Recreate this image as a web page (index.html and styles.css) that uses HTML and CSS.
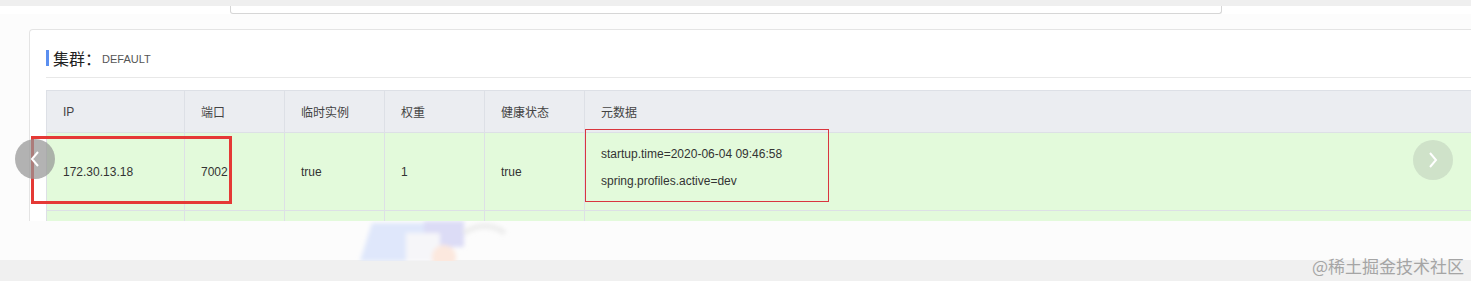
FILE: index.html
```html
<!DOCTYPE html>
<html lang="zh">
<head>
<meta charset="utf-8">
<title>集群</title>
<link rel="stylesheet" href="styles.css">
</head>
<body>
<div class="page">
  <div class="topbar"></div>
  <div class="prev-card"></div>
  <div class="content">
    <section class="card">
      <h3 class="card-title"><span class="title-main">集群：</span><span class="title-sub">DEFAULT</span></h3>
      <div class="divider"></div>
      <table class="grid">
        <colgroup>
          <col class="c-ip"><col class="c-n"><col class="c-n"><col class="c-n"><col class="c-n"><col class="c-meta">
        </colgroup>
        <thead>
          <tr><th>IP</th><th>端口</th><th>临时实例</th><th>权重</th><th>健康状态</th><th>元数据</th></tr>
        </thead>
        <tbody>
          <tr class="row-main">
            <td>172.30.13.18</td><td>7002</td><td>true</td><td>1</td><td>true</td>
            <td class="meta"><div class="meta-line">startup.time=2020-06-04 09:46:58</div><div class="meta-line">spring.profiles.active=dev</div></td>
          </tr>
          <tr class="row-next"><td></td><td></td><td></td><td></td><td></td><td></td></tr>
        </tbody>
      </table>
    </section>
    <div class="mark mark-a"></div>
    <div class="mark mark-b"></div>
    <button class="nav nav-left" aria-label="prev"><svg width="14" height="20" viewBox="0 0 14 20"><path d="M10 3 L4 10 L10 17" fill="none" stroke="#fff" stroke-width="2"/></svg></button>
    <button class="nav nav-right" aria-label="next"><svg width="14" height="20" viewBox="0 0 14 20"><path d="M4 3 L10 10 L4 17" fill="none" stroke="#fff" stroke-width="2"/></svg></button>
  </div>
  <div class="ghost">
    <svg width="200" height="40" viewBox="0 0 200 40">
      <defs><filter id="b" x="-20%" y="-20%" width="140%" height="140%"><feGaussianBlur stdDeviation="2"/></filter></defs>
      <g filter="url(#b)">
        <polygon points="20,40 32,2 92,2 84,40" fill="#dfe7fb"/>
        <rect x="84" y="0" width="40" height="26" fill="#dcdcf6"/>
        <rect x="66" y="12" width="34" height="28" fill="#f6f6f9"/>
        <circle cx="104" cy="36" r="12" fill="#fce8de"/>
        <path d="M124 12 Q145 -2 165 12" stroke="#eeeeee" stroke-width="6" fill="none"/>
      </g>
    </svg>
  </div>
  <div class="footer"><span class="watermark">@稀土掘金技术社区</span></div>
</div>
</body>
</html>
```

FILE: styles.css
```css
* { box-sizing: border-box; }
html, body { margin: 0; padding: 0; }
body {
  width: 1471px;
  height: 281px;
  overflow: hidden;
  background: #fff;
  font-family: "Liberation Sans", "Noto Sans CJK SC", sans-serif;
  font-size: 12px;
  color: #333;
}
.page { position: relative; width: 1471px; height: 281px; }
.topbar { height: 6px; background: #efefef; }
.prev-card {
  margin-left: 230px;
  width: 992px;
  height: 8px;
  border: 1px solid #d6d6d6;
  border-top: none;
  border-radius: 0 0 3px 3px;
}
.content {
  position: relative;
  height: 207px;
  padding: 15px 0 0 29px;
  overflow: hidden;
  background: #fcfcfc;
}
.card {
  height: 200px;
  background: #fff;
  border: 1px solid #e4e4e4;
  border-right: none;
  border-bottom: none;
  border-radius: 4px 0 0 0;
  padding: 20px 0 0 16px;
}
.card-title {
  margin: 0;
  display: flex;
  align-items: center;
  height: 16px;
  border-left: 3px solid #5b8ff0;
  padding-left: 4px;
  font-weight: normal;
}
.title-main { font-size: 16px; color: #222; }
.title-sub { font-size: 11px; color: #555; margin-left: 1px; padding-top: 2px; }
.divider { margin-top: 11px; height: 1px; background: #e8e8e8; }
.grid {
  margin-top: 12px;
  border-collapse: collapse;
  table-layout: fixed;
  width: 1500px;
}
.c-ip { width: 138px; }
.c-n { width: 100px; }
.c-meta { width: 962px; }
.grid th, .grid td {
  border: 1px solid #dde0e6;
  text-align: left;
  padding: 0 0 0 16px;
  font-weight: normal;
}
.grid th {
  height: 42px;
  background: #ebedf1;
  color: #444;
}
.grid td { background: #e3fadb; color: #333; }
.row-main td { height: 78px; }
.row-main td.meta { padding-bottom: 7px; }
.row-next td { height: 20px; }
.meta-line { line-height: 27px; }
.mark { position: absolute; }
.mark-a {
  left: 31px; top: 122px;
  width: 201px; height: 68px;
  border: 3px solid #e53935;
}
.mark-b {
  left: 585px; top: 115px;
  width: 244px; height: 73px;
  border: 1px solid #d9363e;
}
.nav {
  position: absolute;
  width: 40px; height: 40px;
  border: none;
  border-radius: 50%;
  padding: 0;
  display: flex;
  align-items: center;
  justify-content: center;
}
.nav-left { left: 15px; top: 125px; background: rgba(150,150,150,0.72); }
.nav-right { left: 1413px; top: 126px; background: rgba(170,180,170,0.35); }
.ghost {
  height: 39px;
  padding-left: 340px;
  background: #fcfcfc;
}
.ghost svg { display: block; }
.footer {
  height: 21px;
  background: #f0f0f0;
  display: flex;
  justify-content: flex-end;
  padding-right: 7px;
}
.watermark {
  font-family: "Noto Sans CJK SC", sans-serif;
  font-size: 17px;
  line-height: 17px;
  color: #a5a5a5;
  margin-top: -3px;
}
```
